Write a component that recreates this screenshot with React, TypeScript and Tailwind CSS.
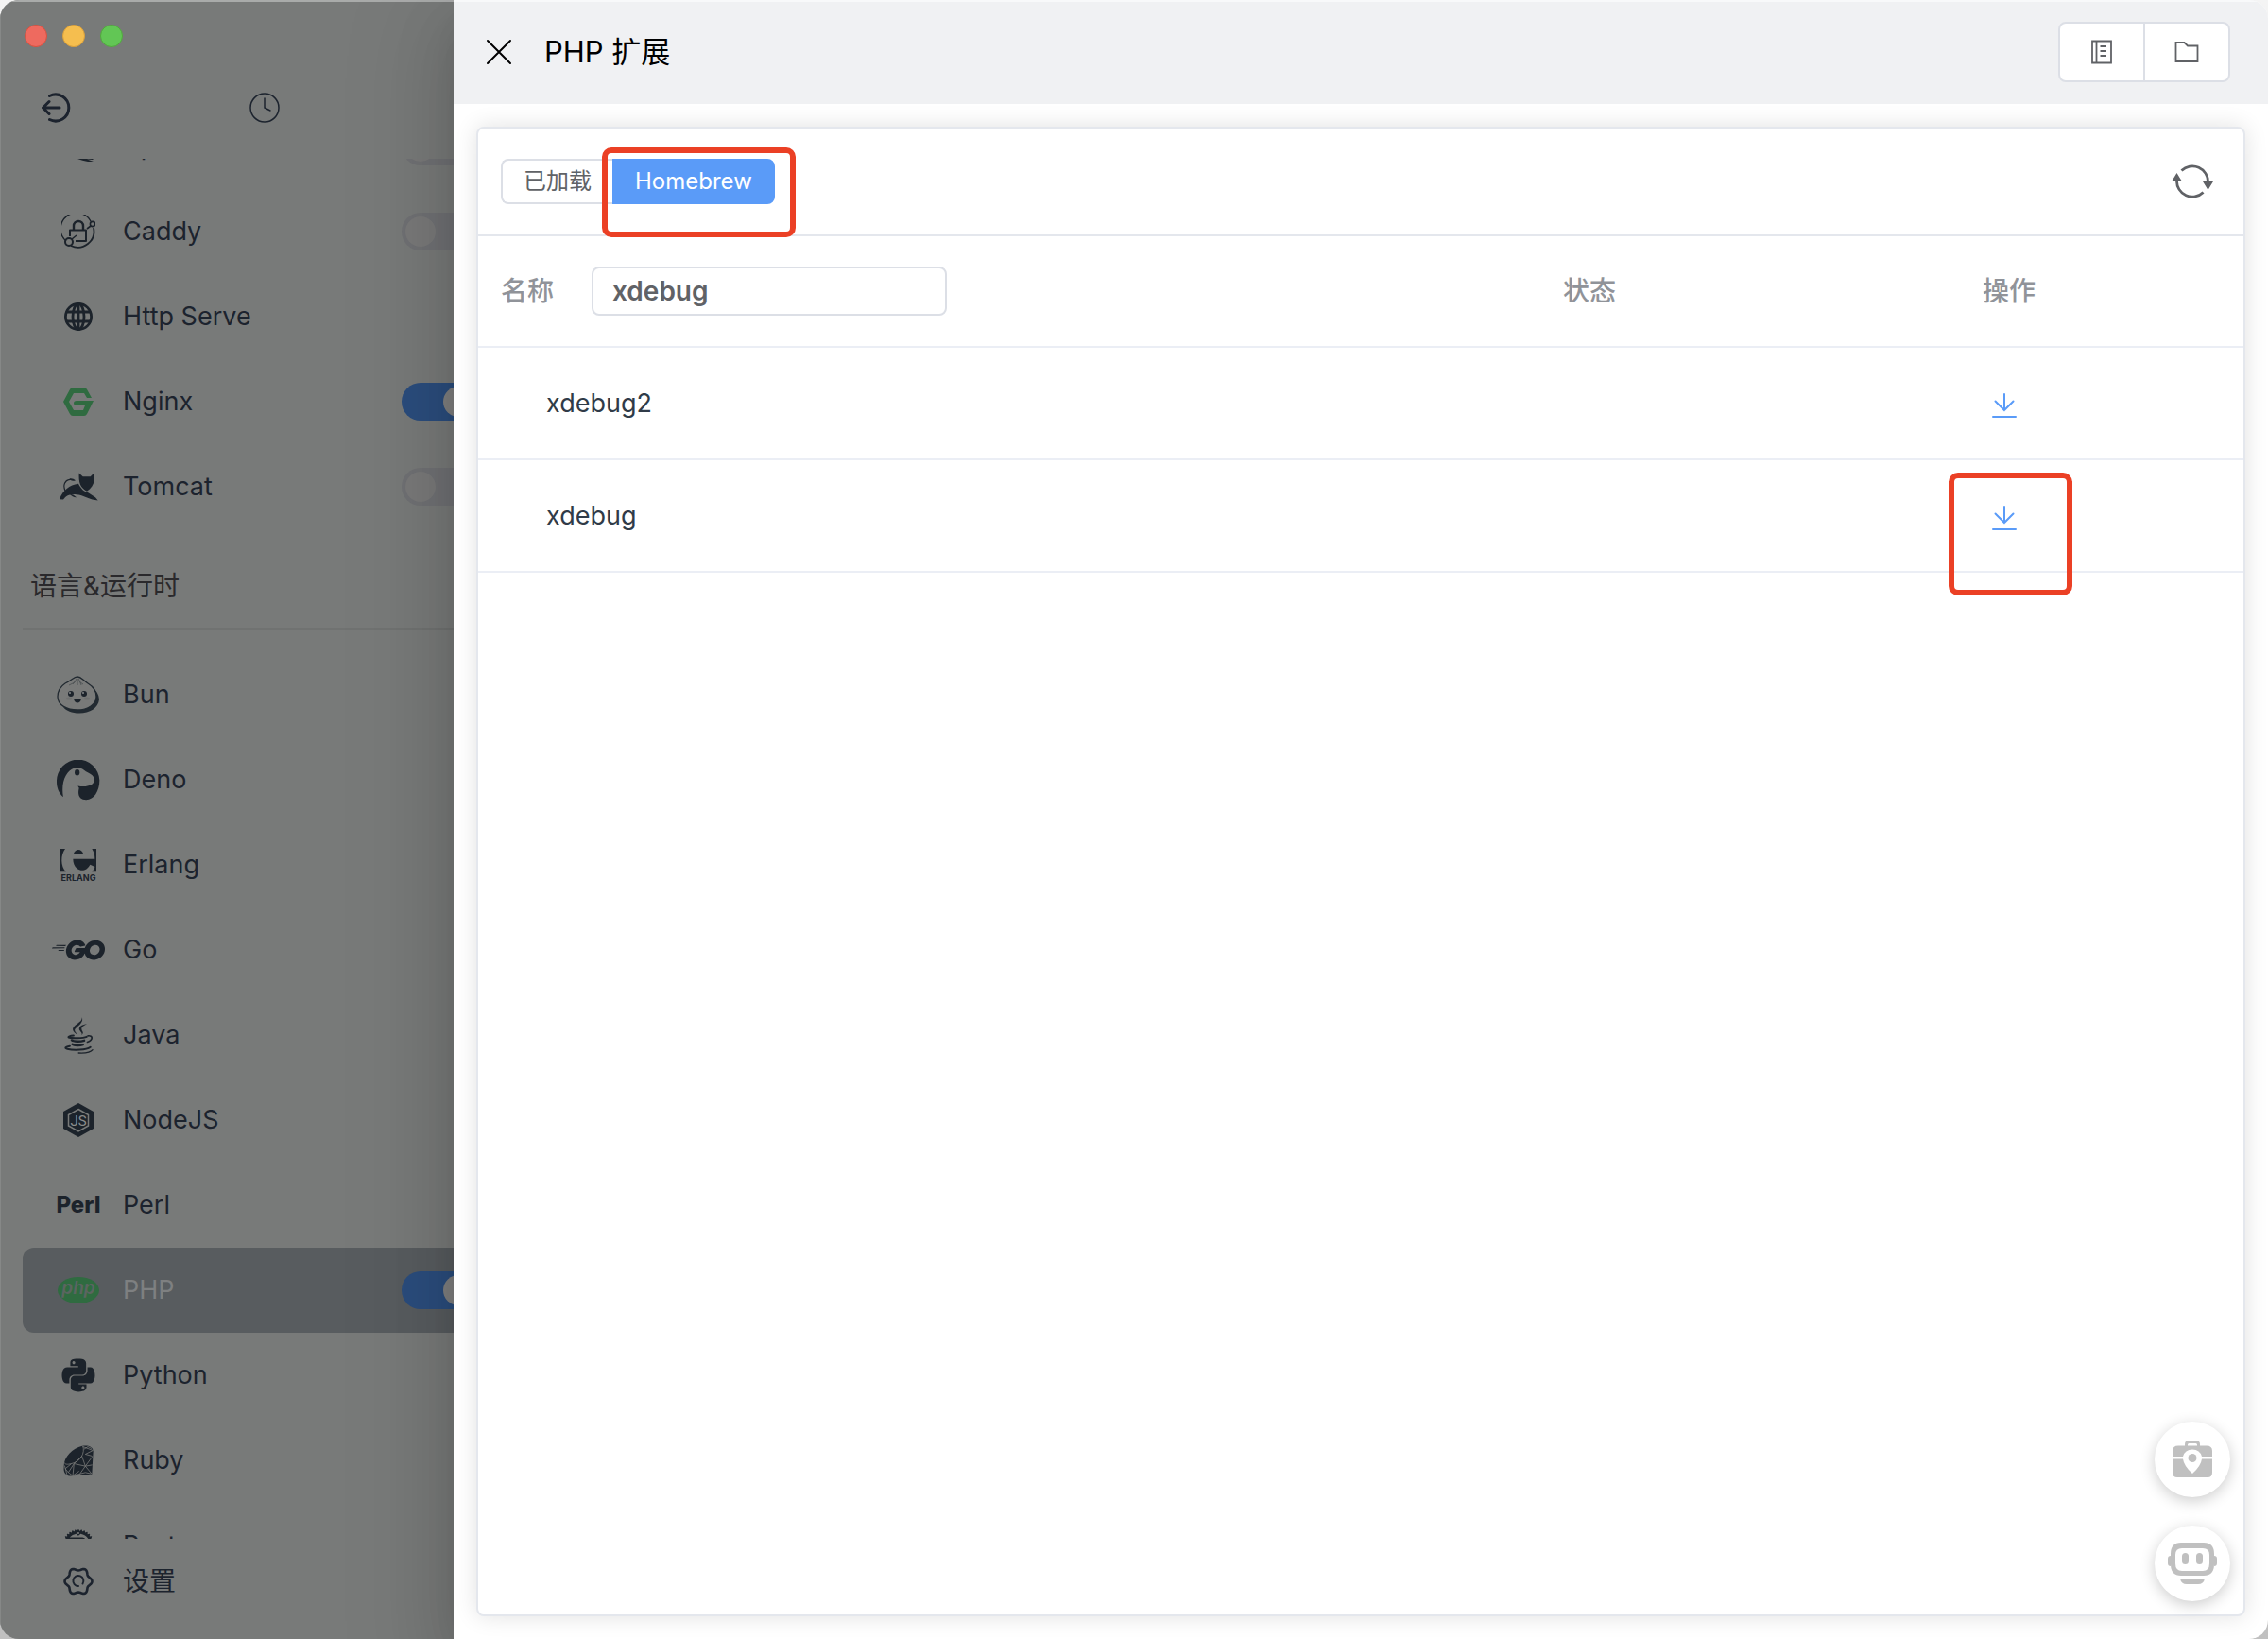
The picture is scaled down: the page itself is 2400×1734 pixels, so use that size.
import { useState, type ReactNode } from "react";
import { FaPython } from "react-icons/fa";
import { SiGo, SiRust } from "react-icons/si";

const CaddyIcon = () => (
  <svg width="36" height="36" viewBox="0 0 36 36" fill="none" stroke="currentColor">
    <path d="M31 7 A17 17 0 1 0 5 28" strokeWidth="1.4" />
    <path d="M34 14 A17 17 0 0 1 10 33" strokeWidth="1.8" />
    <circle cx="33" cy="10" r="2.6" strokeWidth="1.6" />
    <circle cx="8" cy="29" r="4" strokeWidth="2" />
    <path d="M11 26 L16 22 M27 15 L31 12" strokeWidth="1.6" />
    <path d="M13 16 V12 a5 5 0 0 1 10 0 V16" strokeWidth="2.4" />
    <path d="M9 23 V16.5 H26 V28 H15" strokeWidth="2" strokeLinejoin="round" />
  </svg>
);

const GlobeIcon = () => (
  <svg width="30" height="30" viewBox="0 0 30 30" fill="none" stroke="currentColor" strokeWidth="2.8">
    <circle cx="15" cy="15" r="13.6" />
    <ellipse cx="15" cy="15" rx="6" ry="13.6" />
    <path d="M15 1 V29 M3 10 H27 M3 20 H27" />
  </svg>
);

const NginxIcon = () => (
  <svg width="32" height="30" viewBox="0 0 32 30" fill="#2f6b40">
    <path d="M0 15 L7 2 Q8 0 10 0 H22 Q24 0 25 2 L30 11 H25 L22 6 H11 L6 15 L11 24 H21 L23 19 H14 Q11 19 11 16.5 Q11 14 14 14 H32 L25 28 Q24 30 22 30 H10 Q8 30 7 28 Z" />
  </svg>
);

const TomcatIcon = () => (
  <svg width="41" height="30" viewBox="24 19 123 89" fill="currentColor">
    <path d="M86 20 L98 31 H122 L134 19 C137 45 132 64 111 78 C90 66 84 50 86 20 Z" />
    <path d="M24 103 C35 75 55 58 84 54 C92 70 102 80 115 82 L138 97 L146 107 L128 104 C110 98 98 90 78 88 C58 86 46 90 36 104 Z" />
    <path d="M42 76 C34 58 40 42 60 40" fill="none" stroke="currentColor" strokeWidth="3.5" />
    <path d="M56 38 Q66 36 75 43 Q66 47 58 42 Z" />
    <path d="M55 86 Q68 87 78 97 Q66 98 55 86 Z" />
  </svg>
);

const BunIcon = () => (
  <svg width="46" height="40" viewBox="0 0 46 40" fill="none">
    <path d="M36 10 Q45 18 45 25 C44 34 35 39.5 24 39.5 C16 39.5 10 37 7 33 L20 36 Q38 34 41 22 Z" fill="#222a31" />
    <path d="M22 1 C18 1 17 4 9 8 C3 12 1 17 1 22 C1 31 11 36 22 36 C33 36 42 30 42 22 C42 16 38 11 33 8 C27 4 26 1 22 1 Z" fill="#797a79" stroke="#222a31" strokeWidth="1.3" />
    <path d="M21 3 L19 7 L13 10 M22 3 V10 M23 3 L25 7 L28 9 M20 5 L17 9 M24 5 L26 10" stroke="#4a4f52" strokeWidth="0.8" />
    <ellipse cx="13" cy="24" rx="3" ry="1.5" fill="#6f7070" />
    <ellipse cx="32" cy="24" rx="3" ry="1.5" fill="#6f7070" />
    <circle cx="15" cy="19" r="3" fill="#1c232b" />
    <circle cx="29" cy="19" r="3" fill="#1c232b" />
    <circle cx="14" cy="18" r="1" fill="#85888a" />
    <circle cx="28" cy="18" r="1" fill="#85888a" />
    <path d="M18 24.5 H26 Q25 28.5 22 28.5 Q19 28.5 18 24.5 Z" fill="#1c232b" />
  </svg>
);

const DenoIcon = () => (
  <svg width="46" height="43" viewBox="180 340 140 130" fill="currentColor">
    <path d="M201 459 C185 445 180 425 180 410 A69 69 0 0 1 318 405 C318 440 300 468 275 468 C255 468 246 455 252 430 L248 423 C270 428 301 425 301 403 C300 385 285 385 268 372 C258 364 245 362 235 366 C210 376 193 410 201 459 Z" />
    <ellipse cx="246" cy="380" rx="8" ry="10" />
  </svg>
);

const ErlangIcon = () => (
  <svg width="38" height="34" viewBox="192 625 114 102" fill="currentColor">
    <path d="M192 625 H207 C192 645 192 680 209 698 H192 Z" />
    <path d="M233 642 C238 623 260 623 265 642 Z" />
    <path d="M292 625 H306 V698 H292 C297 692 300 687 301 682 L286 675 C275 696 258 697 245 688 C236 680 232 670 232 657 H301 C301 645 298 635 292 625 Z" />
    <text x="249" y="726" textAnchor="middle" fontSize="27" fontWeight="700" fontFamily="Inter, sans-serif">
      ERLANG
    </text>
  </svg>
);

const JavaIcon = () => (
  <svg width="31" height="39" viewBox="29 14 92 118" fill="none" stroke="currentColor" strokeLinecap="round">
    <path d="M85 15 C92 38 60 46 62 58 C63 64 69 66 71 71 C54 60 50 52 64 40 C76 30 84 28 85 15 Z" fill="currentColor" stroke="none" />
    <path d="M101 36 C88 42 82 47 84 54 C86 62 92 62 84 72 C88 62 74 58 76 50 C79 40 90 38 101 36 Z" fill="currentColor" stroke="none" />
    <path d="M58 73 C46 74 40 77 42 79 C54 83 88 82 100 77" strokeWidth="6" />
    <path d="M104 74 C120 72 122 86 102 94" strokeWidth="5" />
    <path d="M52 88 C58 93 80 93 92 89" strokeWidth="7" />
    <path d="M54 101 C60 106 78 106 88 102" strokeWidth="7" />
    <path d="M46 107 C32 109 28 114 38 116 C58 121 98 120 112 110" strokeWidth="6" />
    <path d="M74 129 C96 130 114 126 119 119" strokeWidth="4" />
  </svg>
);

const NodeIcon = () => (
  <svg width="32" height="36" viewBox="0 0 32 36">
    <path d="M16 0 L32 9 V27 L16 36 L0 27 V9 Z" fill="currentColor" />
    <path d="M16 6.5 L26.5 12.5 V24 L16 30 L5.5 24 V12.5 Z" fill="none" stroke="#787a79" strokeWidth="1.5" />
    <text x="16" y="24" textAnchor="middle" fontSize="15" fontFamily="Roboto, sans-serif" fill="#8a8c8b">
      JS
    </text>
  </svg>
);

const PhpIcon = () => (
  <svg width="44" height="28" viewBox="0 0 44 28">
    <ellipse cx="22" cy="14" rx="22" ry="14" fill="#2f6b40" />
    <text x="22" y="18" textAnchor="middle" fontSize="19" fontStyle="italic" fontWeight="600" fontFamily="Inter, sans-serif" fill="#5b6560">
      php
    </text>
  </svg>
);

const RubyIcon = () => (
  <svg width="32" height="33" viewBox="34 566 96 98">
    <path d="M94 568 C112 564 128 570 129 584 L125 658 L54 663 C40 660 34 650 36 636 C34 604 62 576 94 568 Z" fill="currentColor" />
    <path
      d="M96 568 C104 590 88 618 60 624 C46 628 38 626 37 620 M96 570 L128 582 L104 594 L126 600 M100 578 L112 570 L124 576 M93 600 L104 632 L126 602 M93 600 L68 624 L104 632 L84 660 M68 624 L64 662 L84 648 M104 632 L124 656 M104 632 L126 628 M68 624 L50 652 L40 640 L60 624 M50 652 L64 662 L104 652 L122 656 M38 630 L46 660"
      fill="none"
      stroke="#787a79"
      strokeWidth="2.4"
    />
  </svg>
);

const gearPath =
  Array.from({ length: 73 }, (_, i) => {
    const a = (i * 5 * Math.PI) / 180;
    const r = 13 + 1.5 * Math.cos(6 * a);
    return `${i ? "L" : "M"}${(16 + r * Math.cos(a)).toFixed(2)} ${(16 + r * Math.sin(a)).toFixed(2)}`;
  }).join(" ") + " Z";

const GearIcon = () => (
  <svg width="32" height="32" viewBox="0 0 32 32" fill="none" stroke="currentColor" strokeWidth="2.6" strokeLinecap="round">
    <path d={gearPath} />
    <path d="M20.5 18.5 A5.5 5.5 0 1 0 16 21" strokeWidth="2" />
  </svg>
);

const ApacheIcon = () => (
  <svg width="36" height="36" viewBox="0 0 36 36" fill="currentColor">
    <path d="M17 31 L34 31 L33 32 L27 31.5 L34 34 L28 34 Q22 33 17 31 Z" />
  </svg>
);

type Item = { name: string; icon: ReactNode; on?: boolean; active?: boolean };

const servers: Item[] = [
  { name: "Apache", icon: <ApacheIcon />, on: false },
  { name: "Caddy", icon: <CaddyIcon />, on: false },
  { name: "Http Serve", icon: <GlobeIcon /> },
  { name: "Nginx", icon: <NginxIcon />, on: true },
  { name: "Tomcat", icon: <TomcatIcon />, on: false },
];

const languages: Item[] = [
  { name: "Bun", icon: <BunIcon /> },
  { name: "Deno", icon: <DenoIcon /> },
  { name: "Erlang", icon: <ErlangIcon /> },
  { name: "Go", icon: <SiGo size={56} /> },
  { name: "Java", icon: <JavaIcon /> },
  { name: "NodeJS", icon: <NodeIcon /> },
  { name: "Perl", icon: <span className="text-2xl font-extrabold">Perl</span> },
  { name: "PHP", icon: <PhpIcon />, on: true, active: true },
  { name: "Python", icon: <FaPython size={40} /> },
  { name: "Ruby", icon: <RubyIcon /> },
  { name: "Rust", icon: <SiRust size={34} /> },
];

function Switch({ label, initial }: { label: string; initial: boolean }) {
  const [on, setOn] = useState(initial);
  return (
    <input
      type="checkbox"
      role="switch"
      aria-label={label}
      checked={on}
      onChange={() => setOn(!on)}
      className="flex h-10 w-20 shrink-0 appearance-none items-center rounded-full bg-[#707174] px-1 before:size-8 before:rounded-full before:bg-[#797979] checked:justify-end checked:bg-[#2b4d7d] checked:before:bg-[#808080]"
    />
  );
}

function NavRow({ item }: { item: Item }) {
  return (
    <li className={`flex h-[90px] items-center rounded-xl pr-8 pl-6 ${item.active ? "bg-[#585c5f] text-[#7e8081]" : ""}`}>
      <a href={`#${item.name}`} className="flex flex-1 items-center gap-3">
        <span className={`flex w-[70px] justify-center ${item.active ? "" : "text-[#1c232b]"}`}>{item.icon}</span>
        <span className="text-[27px] leading-10">{item.name}</span>
      </a>
      {item.on !== undefined && <Switch label={item.name} initial={item.on} />}
    </li>
  );
}

function Sidebar() {
  return (
    <aside className="flex w-[480px] shrink-0 flex-col overflow-hidden border-t-2 border-l border-t-[#a9abaa] border-l-[#868887] bg-[#787a79] text-[#1c232e]">
      <div className="flex gap-4 pt-6 pl-[25px]">
        <button aria-label="关闭" className="size-6 rounded-full border border-[#d8503f] bg-[#ee6a5f]" />
        <button aria-label="最小化" className="size-6 rounded-full border border-[#dba03a] bg-[#f5be4f]" />
        <button aria-label="缩放" className="size-6 rounded-full border border-[#51a83d] bg-[#62c655]" />
      </div>
      <div className="flex h-[118px] w-[560px] shrink-0 items-center pt-[10px] pl-[43px]">
        <button aria-label="返回" className="mr-[188px]">
          <svg width="32" height="32" viewBox="0 0 32 32" fill="none" stroke="currentColor" strokeWidth="3" strokeLinecap="round" strokeLinejoin="round">
            <path d="M8.5 3.5 A14 14 0 1 1 8.5 28.5" />
            <path d="M19 16 H2 M8 9.5 L1.5 16 L8 22.5" />
          </svg>
        </button>
        <button aria-label="历史">
          <svg width="32" height="32" viewBox="0 0 32 32" fill="none" stroke="currentColor" strokeWidth="1.5" strokeLinecap="round">
            <circle cx="16" cy="16" r="15" />
            <path d="M16 6 V16 L22 19" />
          </svg>
        </button>
      </div>
      <nav className="min-h-0 w-[560px] flex-1 overflow-hidden pr-6 pl-[23px]">
        <ul className="-mt-[58px]">
          {servers.map((item) => (
            <NavRow key={item.name} item={item} />
          ))}
        </ul>
        <h2 className="mb-6 h-[106px] border-b-2 border-[#707271] pt-10 pl-2 text-[28px] leading-10 text-[#2a292c]">语言&amp;运行时</h2>
        <ul>
          {languages.map((item) => (
            <NavRow key={item.name} item={item} />
          ))}
        </ul>
      </nav>
      <a href="#settings" className="mb-4 flex h-[90px] shrink-0 items-center gap-3 pl-[47px] text-[28px]">
        <span className="flex w-[70px] justify-center">
          <GearIcon />
        </span>
        设置
      </a>
    </aside>
  );
}

const DownloadIcon = () => (
  <svg width="28" height="28" viewBox="0 0 28 28" fill="none" stroke="currentColor" strokeWidth="2" strokeLinecap="round">
    <path d="M14 2 V19 M4.5 9.5 L14 19 L23.5 9.5 M2 26 H26" />
  </svg>
);

function ExtensionTable() {
  const [query, setQuery] = useState("xdebug");
  const rows = ["xdebug2", "xdebug"].filter((r) => r.includes(query));
  return (
    <table className="w-full table-fixed text-left text-[28px] leading-10">
      <colgroup>
        <col />
        <col className="w-[444px]" />
        <col className="w-[300px]" />
      </colgroup>
      <thead className="text-[#909399]">
        <tr className="h-[117px] border-b-2 border-[#ebeef5]">
          <th className="pl-6 font-medium">
            <div className="flex items-center gap-10">
              <label htmlFor="name-filter">名称</label>
              <input
                id="name-filter"
                value={query}
                onChange={(e) => setQuery(e.target.value)}
                className="h-[52px] w-[376px] rounded-lg border-2 border-[#dcdfe6] px-5 font-semibold text-[#606266] outline-none"
              />
            </div>
          </th>
          <th className="pl-6 font-medium">状态</th>
          <th className="pl-6 font-medium">操作</th>
        </tr>
      </thead>
      <tbody className="text-[27px] text-[#303b48]">
        {rows.map((name) => (
          <tr key={name} className="h-[119px] border-b-2 border-[#ebeef5]">
            <td className="pl-[72px]">{name}</td>
            <td />
            <td className="pl-[33px]">
              <div className="relative flex w-7">
                <button aria-label={`安装 ${name}`} className="pt-1 text-[#5a9bf8]">
                  <DownloadIcon />
                </button>
                {name === "xdebug" && (
                  <span className="pointer-events-none absolute -top-[30px] -left-[45px] h-[130px] w-[131px] rounded-[10px] border-6 border-[#eb4025]" />
                )}
              </div>
            </td>
          </tr>
        ))}
      </tbody>
    </table>
  );
}

function SourceTabs() {
  const [tab, setTab] = useState("homebrew");
  const base = "relative flex h-12 items-center border-2 px-[22px]";
  const off = "border-[#dcdfe6] bg-white text-[#606266]";
  const on = "border-[#5a9bf8] bg-[#5a9bf8] text-white";
  return (
    <div role="radiogroup" aria-label="来源" className="relative flex text-2xl">
      <label className={`${base} rounded-l-lg border-r-0 ${tab === "loaded" ? on : off}`}>
        <input type="radio" name="source" className="sr-only" checked={tab === "loaded"} onChange={() => setTab("loaded")} />
        已加载
      </label>
      <label className={`${base} rounded-r-lg ${tab === "homebrew" ? on : off}`}>
        <input type="radio" name="source" className="sr-only" checked={tab === "homebrew"} onChange={() => setTab("homebrew")} />
        Homebrew
      </label>
      <span className="pointer-events-none absolute -top-3 -right-[22px] h-[95px] w-[205px] rounded-[10px] border-6 border-[#eb4025]" />
    </div>
  );
}

function Drawer() {
  return (
    <main className="relative z-10 flex min-w-0 flex-1 flex-col bg-white shadow-[0_32px_96px_32px_rgba(0,0,0,0.08),0_24px_64px_rgba(0,0,0,0.12),0_16px_32px_-16px_rgba(0,0,0,0.16)]">
      <header className="flex h-[110px] shrink-0 items-center border-t-2 border-[#f8f9fa] bg-[#f0f1f3] pr-10 pb-0.5 pl-[34px]">
        <button aria-label="关闭抽屉" className="mr-[34px] text-black">
          <svg width="28" height="28" viewBox="0 0 28 28" fill="none" stroke="currentColor" strokeWidth="2" strokeLinecap="round">
            <path d="M2 2 L26 26 M26 2 L2 26" />
          </svg>
        </button>
        <h1 className="flex-1 text-[31px] text-black">PHP 扩展</h1>
        <div className="flex h-16 divide-x-2 divide-[#dcdfe6] rounded-lg border-2 border-[#dcdfe6] bg-white text-[#606266]">
          <button aria-label="日志" className="flex w-[90px] items-center justify-center">
            <svg width="24" height="26" viewBox="0 0 24 26" fill="none" stroke="currentColor" strokeWidth="1.8">
              <path d="M2 1.5 H22 V24.5 H2 Z M6.5 1.5 V24.5 M10.5 7 H17 M10.5 12 H17 M10.5 17 H17" />
            </svg>
          </button>
          <button aria-label="打开目录" className="flex w-[88px] items-center justify-center">
            <svg width="26" height="24" viewBox="0 0 26 24" fill="none" stroke="currentColor" strokeWidth="1.8">
              <path d="M1.5 2 H10.5 L14 5.5 H24.5 V22 H1.5 Z" />
            </svg>
          </button>
        </div>
      </header>
      <div className="flex min-h-0 flex-1 p-6">
        <section className="flex min-w-0 flex-1 flex-col rounded-lg border-2 border-[#e4e7ed] bg-white shadow-[0_0_24px_rgba(0,0,0,0.12)]">
          <div className="flex h-[114px] shrink-0 items-center justify-between border-b-2 border-[#e4e7ed] pr-8 pl-6">
            <SourceTabs />
            <button aria-label="刷新" className="text-[#606266]">
              <svg width="44" height="36" viewBox="0 0 44 36" fill="none" stroke="currentColor" strokeWidth="2.8">
                <path d="M10.5 6.500 A16.5 16.5 0 0 1 38.5 19" />
                <path d="M33.5 29.500 A16.5 16.5 0 0 1 5.5 17" />
                <path d="M33 18 H44 L38.5 27 Z M0 18 H11 L5.5 9 Z" fill="currentColor" stroke="none" />
              </svg>
            </button>
          </div>
          <ExtensionTable />
        </section>
      </div>
      <div className="absolute right-10 bottom-10 flex flex-col gap-[30px]">
        <button aria-label="工具箱" className="flex size-20 items-center justify-center rounded-full bg-white text-[#c0c0c0] shadow-[0_4px_16px_rgba(0,0,0,0.2)]">
          <svg width="42" height="40" viewBox="0 0 42 40" fill="currentColor">
            <path d="M13 7 V4 Q13 0 17 0 H25 Q29 0 29 4 V7 H26 V4.5 Q26 3 24.5 3 H17.5 Q16 3 16 4.5 V7 Z" />
            <path d="M6 5.5 H36 Q42 5.5 42 11 V17 H31 Q29 9.5 21 9.5 Q13 9.5 11 17 H0 V11 Q0 5.5 6 5.5 Z" />
            <path d="M0 19.500 H11 Q12 27 21 35 Q30 27 31 19.5 H42 V34 Q42 39 37 39 H5 Q0 39 0 34 Z" />
            <circle cx="21" cy="18.5" r="4.5" />
          </svg>
        </button>
        <button aria-label="助手" className="flex size-20 items-center justify-center rounded-full bg-white text-[#c0c0c0] shadow-[0_4px_16px_rgba(0,0,0,0.2)]">
          <svg width="52" height="44" viewBox="0 0 52 44" fill="currentColor">
            <path d="M3 14 Q0 14 0 17 V22 Q0 25 3 25 Z M49 14 Q52 14 52 17 V22 Q52 25 49 25 Z" />
            <path fillRule="evenodd" d="M14 0 H38 Q49 0 49 12 V23 Q49 35 38 35 H14 Q3 35 3 23 V12 Q3 0 14 0 Z M15 6 Q8 6 8 13 V22 Q8 30 15 30 H37 Q44 30 44 22 V13 Q44 6 37 6 Z" />
            <rect x="15" y="11" width="7" height="12" rx="3.5" />
            <rect x="30" y="11" width="7" height="12" rx="3.5" />
            <path d="M13 38 H39 Q38 44 32 44 H20 Q14 44 13 38 Z" />
          </svg>
        </button>
      </div>
    </main>
  );
}

export default function App() {
  return (
    <div className="h-screen w-full bg-linear-to-b from-[#f4f4f4] to-[#c0c0c0] font-['Inter','Noto_Sans_CJK_SC',sans-serif]">
      <div className="flex h-full overflow-hidden rounded-[20px]">
        <Sidebar />
        <Drawer />
      </div>
    </div>
  );
}
